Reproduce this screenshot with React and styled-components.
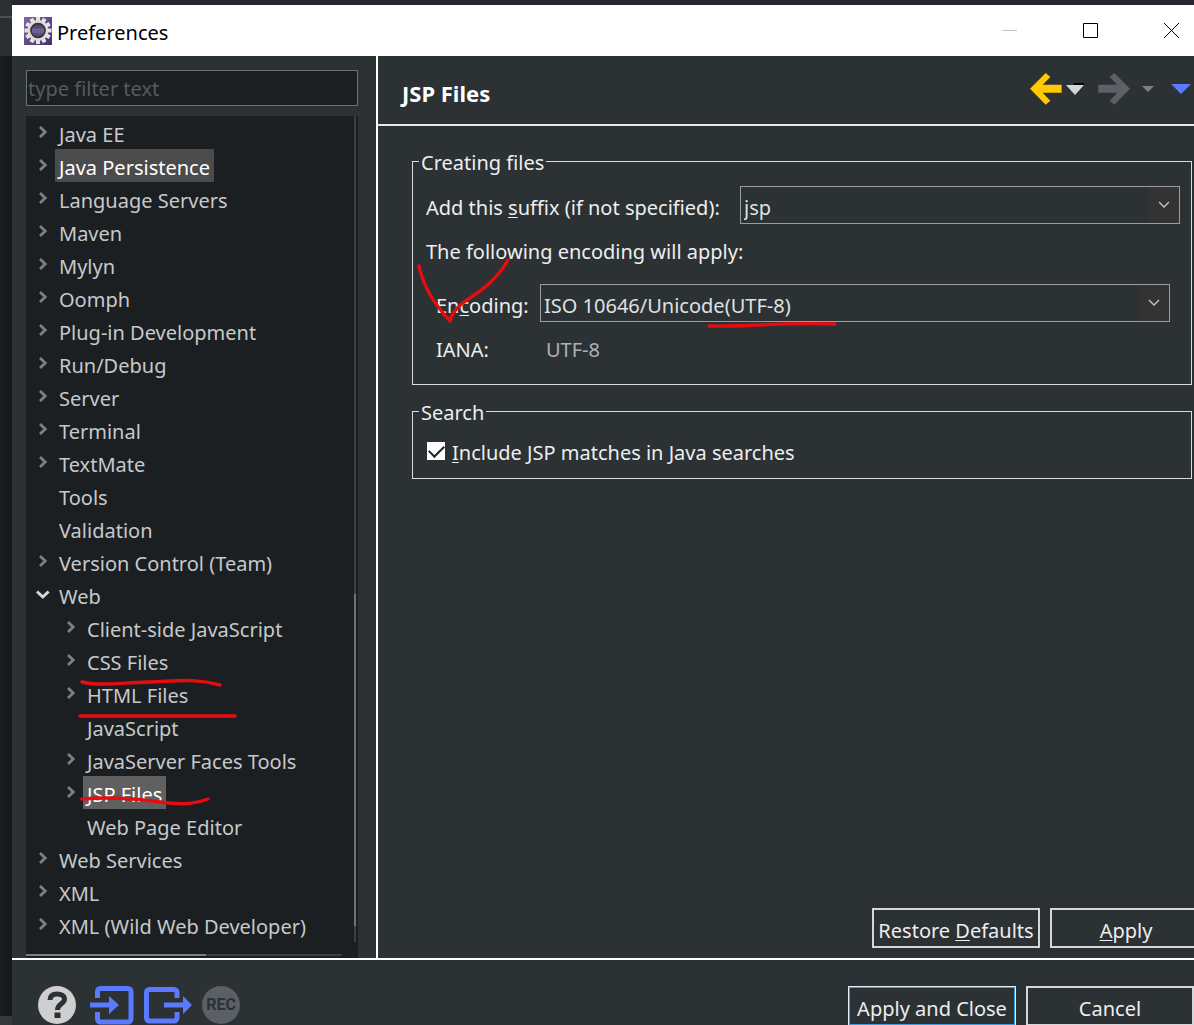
import React, { useState } from "react";
import styled, { createGlobalStyle } from "styled-components";

const treeItems = [
  { label: "Java EE", arrow: "closed" },
  { label: "Java Persistence", arrow: "closed", highlight: "#4b4b4b" },
  { label: "Language Servers", arrow: "closed" },
  { label: "Maven", arrow: "closed" },
  { label: "Mylyn", arrow: "closed" },
  { label: "Oomph", arrow: "closed" },
  { label: "Plug-in Development", arrow: "closed" },
  { label: "Run/Debug", arrow: "closed" },
  { label: "Server", arrow: "closed" },
  { label: "Terminal", arrow: "closed" },
  { label: "TextMate", arrow: "closed" },
  { label: "Tools" },
  { label: "Validation" },
  { label: "Version Control (Team)", arrow: "closed" },
  { label: "Web", arrow: "open" },
  { label: "Client-side JavaScript", arrow: "closed", child: true },
  { label: "CSS Files", arrow: "closed", child: true },
  { label: "HTML Files", arrow: "closed", child: true },
  { label: "JavaScript", child: true },
  { label: "JavaServer Faces Tools", arrow: "closed", child: true },
  { label: "JSP Files", arrow: "closed", child: true, highlight: "#606060" },
  { label: "Web Page Editor", child: true },
  { label: "Web Services", arrow: "closed" },
  { label: "XML", arrow: "closed" },
  { label: "XML (Wild Web Developer)", arrow: "closed" },
];

const teeth = [0, 30, 60, 90, 120, 150, 180, 210, 240, 270, 300, 330];

const GearIcon = () => (
  <svg width="28" height="28" viewBox="0 0 28 28">
    <defs>
      <linearGradient id="gearBg" x1="0" y1="0" x2="1" y2="1">
        <stop offset="0" stopColor="#7d6a9c" />
        <stop offset="1" stopColor="#43306f" />
      </linearGradient>
      <linearGradient id="gearCore" x1="0" y1="0" x2="0" y2="1">
        <stop offset="0" stopColor="#2e2b3b" />
        <stop offset="0.5" stopColor="#6d5e91" />
        <stop offset="1" stopColor="#41336c" />
      </linearGradient>
    </defs>
    <rect width="28" height="28" fill="url(#gearBg)" />
    {teeth.map((angle) => (
      <rect
        key={angle}
        x="12"
        y="0"
        width="4"
        height="5"
        fill="#e6e4e0"
        transform={`rotate(${angle} 14 13.5)`}
      />
    ))}
    <circle cx="14" cy="13.5" r="9" fill="url(#gearCore)" stroke="#dddbd6" strokeWidth="3" />
    <circle cx="14" cy="13.5" r="7" fill="none" stroke="#35323c" strokeWidth="1.5" />
    <path d="M8 12.500h12M8 15h12" stroke="#7566a0" strokeWidth="1" />
  </svg>
);

const TreeArrow = ({ type }) => (
  <svg width="14" height="16" viewBox="0 0 14 16" fill="none">
    {type === "closed" && (
      <path d="M4 2L9.200 7L4 12" stroke="#7d7f82" strokeWidth="2.8" />
    )}
    {type === "open" && (
      <path d="M1 4.500L6.800 10L12.600 4.500" stroke="#d5d8da" strokeWidth="3" />
    )}
  </svg>
);

const ArrowIcon = ({ color, flip }) => (
  <svg width="32" height="32" viewBox="0 0 96 96">
    <path
      fill={color}
      transform={flip ? "translate(96 0) scale(-1 1)" : undefined}
      d="M0 47L47 0L61 12L38 35H95V59H38L61 83L47 95Z"
    />
  </svg>
);

const ComboArrow = () => (
  <svg width="12" height="8" viewBox="0 0 12 8" fill="none">
    <path d="M1 1L6 6L11 1" stroke="#c8c8c8" strokeWidth="1.3" />
  </svg>
);

const Combo = ({ id, value }) => (
  <ComboBox>
    <ComboSelect id={id} defaultValue={value}>
      <option>{value}</option>
    </ComboSelect>
    <ComboButton>
      <ComboArrow />
    </ComboButton>
  </ComboBox>
);

const App = () => {
  const [filter, setFilter] = useState("");
  const [include, setInclude] = useState(true);

  return (
    <>
      <GlobalStyle />
      <Desktop>
        <Workbench>
          <WorkbenchTop />
          <WorkbenchBottom />
        </Workbench>
        <Dialog>
          <TitleBar>
            <GearIcon />
            <Title>Preferences</Title>
            <WindowButton aria-label="Minimize">
              <svg width="17" height="17" viewBox="0 0 17 17">
                <path d="M1 8.500h15" stroke="#c4c4c4" />
              </svg>
            </WindowButton>
            <WindowButton aria-label="Maximize">
              <svg width="17" height="17" viewBox="0 0 17 17">
                <path d="M1.500 1.500h14v14h-14z" fill="none" stroke="#000" />
              </svg>
            </WindowButton>
            <WindowButton aria-label="Close">
              <svg width="17" height="17" viewBox="0 0 17 17">
                <path d="M1 1l15 15M16 1L1 16" stroke="#000" />
              </svg>
            </WindowButton>
          </TitleBar>

          <Body>
            <Sidebar>
              <Filter
                aria-label="Filter"
                placeholder="type filter text"
                value={filter}
                onChange={(e) => setFilter(e.target.value)}
              />
              <Tree>
                <TreeBody>
                  <TreeList>
                    {treeItems.map((item) => (
                      <TreeRow key={item.label} $child={item.child}>
                        <TreeArrow type={item.arrow} />
                        <TreeLabel $highlight={item.highlight}>{item.label}</TreeLabel>
                      </TreeRow>
                    ))}
                  </TreeList>
                  <VTrack>
                    <VThumb />
                  </VTrack>
                </TreeBody>
                <HTrack>
                  <HThumb />
                </HTrack>
                <Marks width="230" height="140" viewBox="0 0 230 140" $left={40} $top={554}>
                  <path d="M16 12C32 16 52 13 82 12S128 8 154 15" />
                  <path d="M14 46H169" />
                  <path d="M16 129C40 127 66 128 94 132S134 132 142 129" />
                </Marks>
              </Tree>
            </Sidebar>

            <Page>
              <PageHeader>
                <h1>JSP Files</h1>
                <ToolButton aria-label="Back" $gap={0}>
                  <ArrowIcon color="#ffc800" />
                </ToolButton>
                <ToolButton aria-label="Back history" $gap={3}>
                  <svg width="20" height="12" viewBox="0 0 20 12">
                    <path d="M9 0h10v3H9z" fill="#000" />
                    <path d="M1 2h18l-9 10z" fill="#d3d6d8" />
                  </svg>
                </ToolButton>
                <ToolButton aria-label="Forward" $gap={13}>
                  <ArrowIcon color="#5c6067" flip />
                </ToolButton>
                <ToolButton aria-label="Forward history" $gap={12}>
                  <svg width="12" height="6" viewBox="0 0 12 6">
                    <path d="M0 0h12l-6 6z" fill="#7c7f82" />
                  </svg>
                </ToolButton>
                <ToolButton aria-label="View menu" $gap={17}>
                  <svg width="20" height="10" viewBox="0 0 20 10">
                    <path d="M0 0h20l-10 10z" fill="#5b7aff" />
                  </svg>
                </ToolButton>
              </PageHeader>

              <Groups>
                <Group>
                  <legend>Creating files</legend>
                  <Field>
                    <Label htmlFor="suffix">
                      Add this <u>s</u>uffix (if not specified):
                    </Label>
                    <Combo id="suffix" value="jsp" />
                  </Field>
                  <Note>The following encoding will apply:</Note>
                  <EncodingGrid>
                    <Label htmlFor="encoding">
                      En<u>c</u>oding:
                    </Label>
                    <Combo id="encoding" value="ISO 10646/Unicode(UTF-8)" />
                    <label htmlFor="iana">IANA:</label>
                    <Iana id="iana" value="UTF-8" readOnly />
                  </EncodingGrid>
                  <Marks width="430" height="80" viewBox="0 0 430 80" $left={0} $top={80}>
                    <path d="M6 9C10 28 22 48 37 64C38 58 42 52 51 45C64 36 82 26 95 3" />
                    <path d="M296 69C340 70 360 65 422 67" />
                  </Marks>
                </Group>

                <Group>
                  <legend>Search</legend>
                  <CheckRow>
                    <Checkbox
                      id="include"
                      type="checkbox"
                      checked={include}
                      onChange={(e) => setInclude(e.target.checked)}
                    />
                    <label htmlFor="include">
                      <u>I</u>nclude JSP matches in Java searches
                    </label>
                  </CheckRow>
                </Group>
              </Groups>

              <PageButtons>
                <Button>
                  Restore <u>D</u>efaults
                </Button>
                <Button $narrow>
                  <u>A</u>pply
                </Button>
              </PageButtons>
            </Page>
          </Body>

          <Footer>
            <IconButton aria-label="Help">
              <svg width="43" height="40" viewBox="0 0 43 40">
                <circle cx="20" cy="20" r="19" fill="#cfcfcf" />
                <path
                  d="M13 15C13 10.500 16 9 20 9C24.500 9 27.500 11 27.500 14.300C27.500 19 20.500 18.800 20.500 25"
                  fill="none"
                  stroke="#2c3134"
                  strokeWidth="5"
                />
                <path d="M17.500 27.500h6v5.500h-6z" fill="#2c3134" />
              </svg>
            </IconButton>
            <IconButton aria-label="Import">
              <svg width="44" height="40" viewBox="0 0 44 40">
                <path
                  d="M7.500 13V6.500a3 3 0 0 1 3-3H38a3 3 0 0 1 3 3V34a3 3 0 0 1-3 3H10.500a3 3 0 0 1-3-3V27"
                  fill="none"
                  stroke="#5b7aff"
                  strokeWidth="5"
                />
                <path d="M0 17.500h19V11l10 9-10 9v-6.500H0z" fill="#5b7aff" />
              </svg>
            </IconButton>
            <IconButton aria-label="Export">
              <svg width="48" height="40" viewBox="0 0 48 40">
                <path
                  d="M33 13V7.500a3 3 0 0 0-3-3H5.500a3 3 0 0 0-3 3V33a3 3 0 0 0 3 3H30a3 3 0 0 0 3-3V27"
                  fill="none"
                  stroke="#5b7aff"
                  strokeWidth="5"
                />
                <path d="M20 17.500h19V11l9 9-9 9v-6.500H20z" fill="#5b7aff" />
              </svg>
            </IconButton>
            <RecordButton>REC</RecordButton>
            <Spacer />
            <Button $primary>Apply and Close</Button>
            <Button>Cancel</Button>
          </Footer>
        </Dialog>
      </Desktop>
    </>
  );
};

const GlobalStyle = createGlobalStyle`
  * {
    box-sizing: border-box;
  }
  body {
    margin: 0;
    overflow: hidden;
    background: #1b1e22;
    color: #eceeef;
    font-family: "Noto Sans", "Open Sans", sans-serif;
    font-size: 20px;
    line-height: 28px;
  }
  button, input, select {
    font: inherit;
    color: inherit;
  }
  svg {
    display: block;
    flex: none;
  }
  u {
    text-underline-offset: 2px;
    text-decoration-thickness: 1px;
  }
`;

const Desktop = styled.div`
  display: flex;
  height: 100vh;
  background: #24282d;
`;

const Workbench = styled.div`
  flex: none;
  width: 12px;
  display: flex;
  flex-direction: column;
  justify-content: space-between;
  background: linear-gradient(90deg, #1b1e22, #14171a);
`;

const WorkbenchTop = styled.div`
  height: 56px;
  background: linear-gradient(#2b3034 16px, #4b5054 16px, #4b5054 18px, #2a2e32 18px);
`;

const WorkbenchBottom = styled.div`
  height: 9px;
  background: #34393c;
`;

const Dialog = styled.div`
  flex: 1;
  min-width: 0;
  margin-top: 5px;
  display: flex;
  flex-direction: column;
  background: #2c3134;
`;

const TitleBar = styled.header`
  flex: none;
  display: flex;
  align-items: center;
  height: 51px;
  padding-left: 12px;
  background: #fff;
  color: #000;
`;

const Title = styled.div`
  flex: 1;
  padding: 4px 0 0 5px;
`;

const WindowButton = styled.button`
  display: flex;
  align-items: center;
  justify-content: center;
  width: 81px;
  height: 51px;
  padding: 0;
  border: none;
  background: none;

  &:last-child {
    width: 45px;
    margin-left: 18px;
  }
`;

const Body = styled.div`
  flex: 1;
  min-height: 0;
  display: flex;
  border-bottom: 2px solid #fff;
`;

const Sidebar = styled.aside`
  flex: none;
  display: flex;
  flex-direction: column;
  gap: 10px;
  width: 366px;
  padding: 14px 18px 0 14px;
  border-right: 2px solid #fff;
`;

const Filter = styled.input`
  flex: none;
  height: 36px;
  padding: 0 1px;
  border: 1px solid #6d7276;
  background: #1c1f22;

  &::placeholder {
    color: #58595b;
    opacity: 1;
  }
`;

const Tree = styled.div`
  position: relative;
  flex: 1;
  min-height: 0;
  display: flex;
  flex-direction: column;
  background: #1c1f22;
`;

const TreeBody = styled.div`
  flex: 1;
  min-height: 0;
  display: flex;
  padding-right: 2px;
`;

const TreeList = styled.ul`
  flex: 1;
  min-height: 0;
  overflow: hidden;
  margin: 0;
  padding: 0;
  list-style: none;
  color: #c6c9cb;
`;

const TreeRow = styled.li`
  display: flex;
  align-items: center;
  gap: 5px;
  height: 33px;
  padding-left: ${(props) => (props.$child ? "38px" : "10px")};
`;

const TreeLabel = styled.span`
  padding: 5px 4px 0;
  white-space: nowrap;
  color: ${(props) => (props.$highlight ? "#fff" : "inherit")};
  background: ${(props) => props.$highlight || "none"};
`;

const VTrack = styled.div`
  display: flex;
  flex-direction: column;
  justify-content: flex-end;
  width: 2px;
  margin-bottom: 12px;
  padding-bottom: 16px;
  background: #3b3e42;
`;

const VThumb = styled.div`
  height: 41%;
  background: #6e727b;
`;

const HTrack = styled.div`
  flex: none;
  height: 2px;
  margin: 0 16px 2px 0;
  background: #3b3e42;
`;

const HThumb = styled.div`
  width: 57%;
  height: 2px;
  background: #7a7e87;
`;

const Marks = styled.svg`
  position: absolute;
  left: ${(props) => props.$left}px;
  top: ${(props) => props.$top}px;
  pointer-events: none;
  fill: none;
  stroke: #e80c0e;
  stroke-width: 3.4;
  stroke-linecap: round;
  stroke-linejoin: round;
`;

const Page = styled.main`
  flex: 1;
  min-width: 0;
  display: flex;
  flex-direction: column;
  overflow: hidden;
`;

const PageHeader = styled.div`
  flex: none;
  display: flex;
  align-items: center;
  height: 70px;
  padding: 0 3px 2px 24px;
  border-bottom: 2px solid #e8e8e8;

  h1 {
    flex: 1;
    margin: 0;
    padding-top: 8px;
    font-size: 22px;
    line-height: 28px;
    color: #fff;
  }
`;

const ToolButton = styled.button`
  display: flex;
  align-items: center;
  flex: none;
  height: 32px;
  margin-left: ${(props) => props.$gap}px;
  padding: 0;
  border: none;
  background: none;
`;

const Groups = styled.div`
  flex: 1;
  display: flex;
  flex-direction: column;
  gap: 10px;
  padding: 19px 2px 0 34px;
`;

const Group = styled.fieldset`
  position: relative;
  min-width: 0;
  margin: 0;
  padding: 9px 11px 11px 13px;
  border: 1px solid #d9dcde;

  legend {
    margin-left: -7px;
    padding: 4px 2px 0;
  }
`;

const Field = styled.div`
  display: grid;
  grid-template-columns: 304px 1fr;
  column-gap: 10px;
  align-items: center;
`;

const Label = styled.label`
  padding-top: 5px;
  white-space: nowrap;
`;

const ComboBox = styled.div`
  min-width: 0;
  display: flex;
  height: 38px;
  border: 1px solid #9a9da0;
  position: relative;
`;

const ComboSelect = styled.select`
  flex: 1;
  min-width: 0;
  appearance: none;
  padding: 6px 34px 0 3px;
  border: none;
  border-radius: 0;
  outline: none;
  background: #2c3134;
  color: #dfe1e2;
`;

/* sits over the native select so the whole box stays clickable */
const ComboButton = styled.span`
  position: absolute;
  top: 0;
  right: 0;
  bottom: 0;
  display: flex;
  align-items: center;
  justify-content: center;
  width: 30px;
  background: #333334;
  pointer-events: none;
`;

const Note = styled.p`
  margin: 14px 0 18px;
`;

const EncodingGrid = styled.div`
  display: grid;
  grid-template-columns: 94px 1fr;
  column-gap: 10px;
  row-gap: 14px;
  align-items: center;
  padding: 0 10px 9px;
`;

const Iana = styled.input`
  width: 100%;
  height: 28px;
  padding: 0 6px;
  border: none;
  outline: none;
  background: none;
  color: #aeb1b3;
`;

const CheckRow = styled.div`
  display: flex;
  align-items: center;
  gap: 7px;
  padding-top: 3px;
`;

const Checkbox = styled.input`
  appearance: none;
  flex: none;
  display: grid;
  place-items: center;
  width: 18px;
  height: 18px;
  margin: 0 0 4px 1px;
  background: #fff;

  &:checked::after {
    content: "";
    width: 13px;
    height: 7px;
    margin-bottom: 4px;
    border: solid #222;
    border-width: 0 0 2px 2px;
    transform: rotate(-45deg);
  }
`;

const PageButtons = styled.div`
  flex: none;
  display: flex;
  justify-content: flex-end;
  gap: 10px;
  margin: 0 -8px 10px 0;
`;

const Button = styled.button`
  flex: none;
  width: ${(props) => (props.$narrow ? "152px" : "168px")};
  height: 40px;
  padding: 6px 0 0;
  border: 2px solid ${(props) => (props.$primary ? "#3d9be0" : "#d4d6d8")};
  outline: ${(props) => (props.$primary ? "1px solid #dceefa" : "none")};
  outline-offset: -1px;
  background: #2c3134;
  white-space: nowrap;
`;

const Footer = styled.footer`
  flex: none;
  display: flex;
  align-items: flex-start;
  gap: 10px;
  height: 65px;
  padding: 26px 0 0 25px;
  overflow: hidden;
`;

const IconButton = styled.button`
  padding: 0;
  border: none;
  background: none;
  margin-top: -1px;
`;

const RecordButton = styled.button`
  width: 38px;
  height: 38px;
  padding: 0;
  border: none;
  border-radius: 50%;
  background: #5b5f66;
  color: #2c3134;
  font-family: Roboto, sans-serif;
  font-size: 16px;
  font-weight: 700;
`;

const Spacer = styled.div`
  flex: 1;
`;

export default App;
